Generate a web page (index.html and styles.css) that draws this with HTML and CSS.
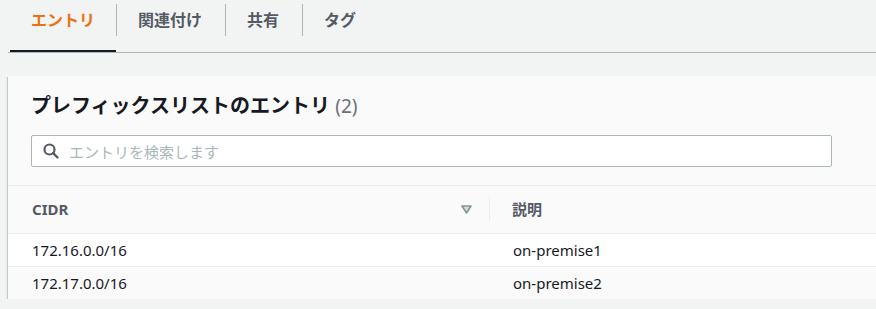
FILE: index.html
```html
<!DOCTYPE html>
<html lang="ja">
<head>
  <meta charset="UTF-8">
  <title>プレフィックスリスト</title>
  <link rel="stylesheet" href="styles.css">
</head>
<body>
  <div class="page">
    <ul class="tabs">
      <li class="tab active">エントリ</li>
      <li class="tab">関連付け</li>
      <li class="tab">共有</li>
      <li class="tab">タグ</li>
    </ul>

    <div class="card">
      <div class="card-header">
        <h2>プレフィックスリストのエントリ <span class="count">(2)</span></h2>
        <div class="search">
          <svg class="search-icon" width="16" height="16" viewBox="0 0 16 16">
            <circle cx="6.5" cy="6.5" r="5" fill="none" stroke="#545b64" stroke-width="2.2"/>
            <line x1="10.2" y1="10.2" x2="14.5" y2="14.5" stroke="#545b64" stroke-width="2.4" stroke-linecap="round"/>
          </svg>
          <span class="placeholder">エントリを検索します</span>
        </div>
      </div>

      <table class="entries">
        <thead>
          <tr>
            <th class="col-cidr">
              <div class="th-inner">
                <span>CIDR</span>
                <svg class="sort" width="11" height="9" viewBox="0 0 11 9">
                  <polygon points="1,1 10,1 5.5,8" fill="#d5dbdb" stroke="#879596" stroke-width="1.6" stroke-linejoin="round"/>
                </svg>
              </div>
            </th>
            <th class="col-desc">説明</th>
          </tr>
        </thead>
        <tbody>
          <tr><td>172.16.0.0/16</td><td>on-premise1</td></tr>
          <tr><td>172.17.0.0/16</td><td>on-premise2</td></tr>
        </tbody>
      </table>
    </div>
  </div>
</body>
</html>
```

FILE: styles.css
```css
body {
  margin: 0;
  background: #f2f3f3;
  font-family: "Noto Sans", "Noto Sans CJK JP", sans-serif;
  color: #16191f;
  overflow: hidden;
}

.page {
  padding-left: 8px;
}

/* Tabs */
.tabs {
  list-style: none;
  margin: 0;
  padding: 0 0 0 2px;
  display: flex;
  border-bottom: 1px solid #aab7b8;
}

.tab {
  position: relative;
  height: 50px;
  padding: 0 23px 0 22px;
  font-size: 16px;
  font-weight: bold;
  color: #545b64;
  line-height: 40px;
  border-bottom: 2px solid transparent;
}

.tab + .tab::before {
  content: "";
  position: absolute;
  left: 0;
  top: 4px;
  height: 32px;
  border-left: 1px solid #aab7b8;
}

.tab.active {
  padding: 0 21px;
  color: #ec7211;
  border-bottom-color: #16191f;
}

/* Card */
.card {
  margin-top: 23px;
  width: 1000px;
  background: #fafafa;
  box-shadow: 0 1px 1px 0 rgba(0, 28, 36, 0.3), 1px 1px 1px 0 rgba(0, 28, 36, 0.15), -1px 1px 1px 0 rgba(0, 28, 36, 0.15);
}

.card-header {
  padding: 16px 23px 18px;
  border-bottom: 1px solid #eaeded;
}

.card-header h2 {
  margin: 0;
  font-size: 20px;
  line-height: 28px;
  font-weight: bold;
}

.count {
  font-weight: normal;
  font-size: 19px;
  color: #687078;
}

.search {
  margin-top: 15px;
  width: 799px;
  height: 30px;
  border: 1px solid #aab7b8;
  border-radius: 2px;
  background: #ffffff;
  display: flex;
  align-items: center;
}

.search-icon {
  margin-left: 11px;
  margin-right: 10px;
}

.placeholder {
  font-size: 15px;
  color: #aab7b8;
}

/* Table */
.entries {
  width: 100%;
  border-collapse: collapse;
  font-size: 15px;
}

.entries th {
  height: 45px;
  text-align: left;
  font-weight: bold;
  color: #545b64;
  padding: 0 0 2px;
}

.col-cidr {
  width: 482px;
}

.th-inner {
  display: flex;
  align-items: center;
  justify-content: space-between;
  padding-left: 24px;
  padding-right: 17px;
  border-right: 1px solid #eaeded;
  height: 23px;
}

.sort {
  margin-top: 2px;
}

.entries th.col-desc {
  padding-left: 22px;
}

.entries td {
  height: 32px;
  padding: 0 0 0 24px;
  border-top: 1px solid #eaeded;
}

.entries td + td {
  padding-left: 23px;
}

.entries tbody tr:nth-child(1) {
  background: #ffffff;
}

.entries tbody tr:nth-child(2) {
  background: #fafafa;
}
```
